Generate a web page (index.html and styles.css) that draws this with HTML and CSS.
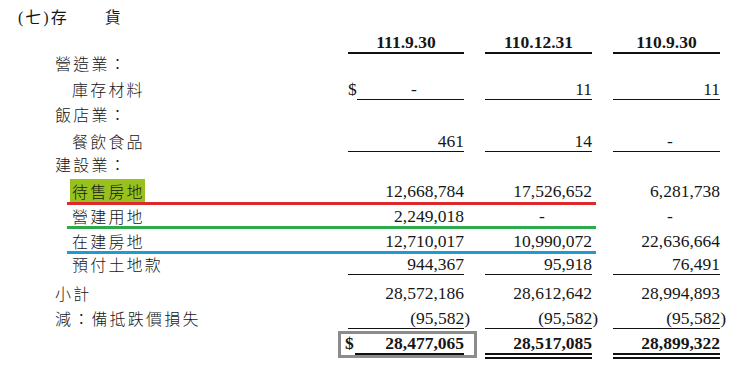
FILE: index.html
```html
<!DOCTYPE html>
<html lang="zh-Hant">
<head>
<meta charset="utf-8">
<title>存貨</title>
<link rel="stylesheet" href="styles.css">
</head>
<body>
<div class="page">
  <div class="title">(七)存　　貨</div>

  <div class="row head">
    <div></div>
    <div class="h">111.9.30</div>
    <div class="h">110.12.31</div>
    <div class="h">110.9.30</div>
  </div>

  <div class="row h21"><div class="lab sec">營造業：</div></div>
  <div class="row h27">
    <div class="lab item">庫存材料</div>
    <div class="cash"><span class="cur">$</span><span class="num u dash">-</span></div>
    <div class="num u">11</div>
    <div class="num u">11</div>
  </div>

  <div class="row h25"><div class="lab sec">飯店業：</div></div>
  <div class="row h27">
    <div class="lab item">餐飲食品</div>
    <div class="num u">461</div>
    <div class="num u">14</div>
    <div class="num u dash">-</div>
  </div>

  <div class="row h23"><div class="lab sec">建設業：</div></div>
  <div class="row h27 mark red">
    <div class="lab item"><span class="hl">待售房地</span></div>
    <div class="num">12,668,784</div>
    <div class="num">17,526,652</div>
    <div class="num">6,281,738</div>
  </div>
  <div class="row h25 mark green">
    <div class="lab item">營建用地</div>
    <div class="num">2,249,018</div>
    <div class="num dash">-</div>
    <div class="num dash">-</div>
  </div>
  <div class="row h25 mark blue">
    <div class="lab item">在建房地</div>
    <div class="num">12,710,017</div>
    <div class="num">10,990,072</div>
    <div class="num">22,636,664</div>
  </div>
  <div class="row h23">
    <div class="lab item">預付土地款</div>
    <div class="num u">944,367</div>
    <div class="num u">95,918</div>
    <div class="num u">76,491</div>
  </div>
  <div class="row h29">
    <div class="lab sec">小計</div>
    <div class="num">28,572,186</div>
    <div class="num">28,612,642</div>
    <div class="num">28,994,893</div>
  </div>
  <div class="row h25">
    <div class="lab sec">減：備抵跌價損失</div>
    <div class="num u">(95,582<span class="rp">)</span></div>
    <div class="num u">(95,582<span class="rp">)</span></div>
    <div class="num u">(95,582<span class="rp">)</span></div>
  </div>
  <div class="row total">
    <div></div>
    <div class="boxed"><span class="cur">$</span><span class="num single">28,477,065</span></div>
    <div class="num dbl">28,517,085</div>
    <div class="num dbl">28,899,322</div>
  </div>
</div>
</body>
</html>
```

FILE: styles.css
```css
* { box-sizing: border-box; }

body {
  margin: 0;
  background: #ffffff;
  color: #161616;
  font-family: "Liberation Serif", "Noto Sans CJK TC", serif;
}

.page {
  width: 740px;
}

.title {
  padding: 8px 0 0 18px;
  height: 27px;
  font-size: 16px;
  line-height: 19px;
  letter-spacing: 2px;
}

.row {
  position: relative;
  display: grid;
  grid-template-columns: 327px 116px 107px 107px;
  column-gap: 21px;
  align-items: end;
  padding-bottom: 2px;
}

.h21 { height: 21px; }
.h23 { height: 23px; }
.h25 { height: 25px; }
.h27 { height: 27px; }
.h29 { height: 29px; }

.head {
  height: 26.6px;
  padding-bottom: 0;
}

.h {
  font-weight: bold;
  font-size: 17.5px;
  line-height: 19px;
  text-align: center;
  border-bottom: 2px solid #111;
}

.lab {
  font-family: "Noto Sans CJK TC", sans-serif;
  font-weight: 300;
  font-size: 16px;
  line-height: 19px;
  letter-spacing: 2.2px;
  border-bottom: 1px solid transparent;
  white-space: nowrap;
}

.sec { padding-left: 55px; }
.item { padding-left: 72px; }

.hl {
  background: #98c11e;
  padding-left: 2px;
  margin-left: -2px;
}

.num {
  font-size: 17.5px;
  line-height: 19px;
  text-align: right;
  border-bottom: 1px solid transparent;
  white-space: nowrap;
}

.num.u { border-bottom-color: #111; }

.dash {
  text-align: center;
  padding-left: 7px;
}

.rp { margin-right: -6px; }

.cash {
  display: flex;
  align-items: flex-end;
}

.cur {
  font-size: 17.5px;
  line-height: 19px;
  width: 9px;
  border-bottom: 1px solid transparent;
}

.cash .num { flex: 1; }

.mark::after {
  content: "";
  position: absolute;
  left: 67px;
  width: 529px;
  height: 3px;
  bottom: 0;
}

.red::after { background: #dc2a2d; bottom: -1px; }
.green::after { background: #2bab4c; }
.blue::after { background: #1f9ad5; }

.total {
  height: 28px;
  padding-bottom: 0;
  font-weight: bold;
}

.boxed {
  display: flex;
  align-items: flex-end;
  margin: 0 -13px 1px -10px;
  padding: 0 10px 0 4px;
  border: 3px solid #8c8c8c;
}

.boxed .cur {
  width: 10px;
  border-bottom-width: 2px;
}

.boxed .single {
  flex: 1;
  border-bottom: 2px solid #111;
}

.num.dbl {
  border-bottom: 6px double #111;
}
```
